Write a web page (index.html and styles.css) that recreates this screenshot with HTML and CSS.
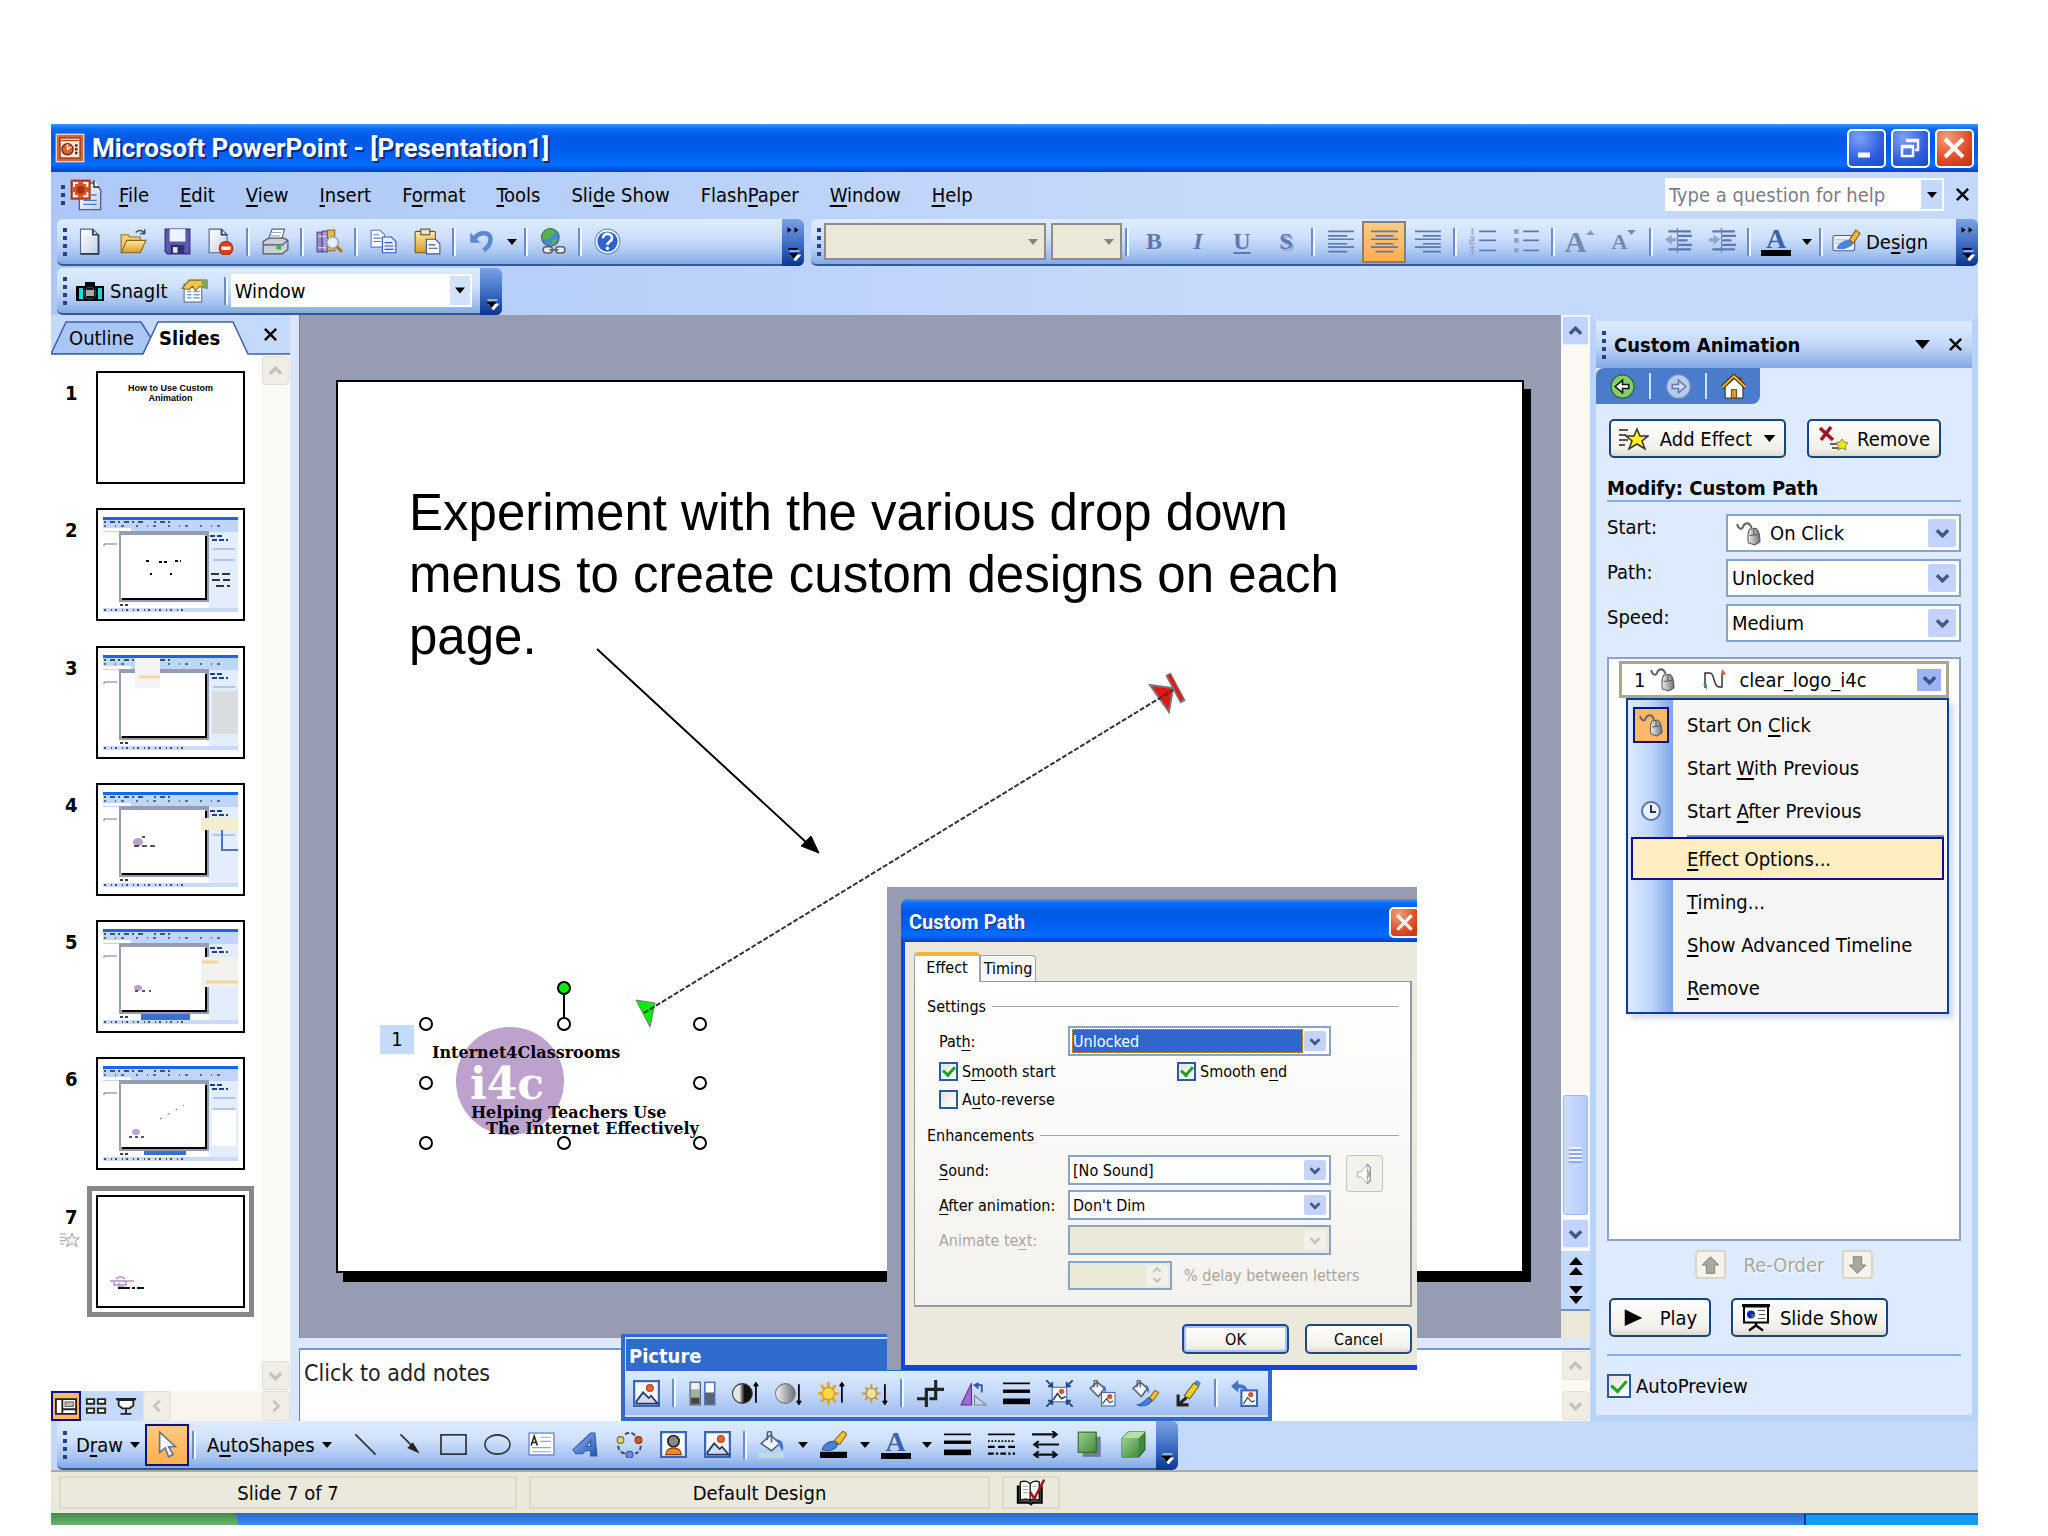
FILE: index.html
```
<!DOCTYPE html>
<html lang="en">
<head>
    <meta charset="UTF-8">
    <meta name="viewport" content="width=device-width, initial-scale=1.0">
    <title>Microsoft PowerPoint - [Presentation1]</title>
    <link rel="stylesheet" href="styles.css">
</head>
<body>
    <!-- Icon sprite, 24x24 grid -->
    <svg class="sprite" aria-hidden="true">
        <defs>
            <linearGradient id="g-page" x1="0" y1="0" x2="1" y2="1"><stop offset="0" stop-color="#fff"/><stop offset="1" stop-color="#c3d0e6"/></linearGradient>
            <linearGradient id="g-gold" x1="0" y1="0" x2="0" y2="1"><stop offset="0" stop-color="#ffe9a0"/><stop offset="1" stop-color="#d99a2b"/></linearGradient>
            <linearGradient id="g-blue" x1="0" y1="0" x2="1" y2="1"><stop offset="0" stop-color="#8fb8f4"/><stop offset="1" stop-color="#2456b0"/></linearGradient>
            <linearGradient id="g-green" x1="0" y1="0" x2="1" y2="1"><stop offset="0" stop-color="#9ad28e"/><stop offset="1" stop-color="#3f8a3c"/></linearGradient>
            <linearGradient id="g-gray" x1="0" y1="0" x2="1" y2="0"><stop offset="0" stop-color="#f2f2f2"/><stop offset="1" stop-color="#6c7078"/></linearGradient>
            <linearGradient id="g-half" x1="0" y1="0" x2="1" y2="0"><stop offset=".35" stop-color="#e6e6e6"/><stop offset=".6" stop-color="#111"/></linearGradient>
        </defs>
        <symbol id="i-app" viewBox="0 0 24 24"><rect x="1" y="1" width="22" height="22" fill="#d9643a" stroke="#ffd9c2"/><rect x="4" y="4" width="16" height="16" fill="#fbe6d8" stroke="#8d3213"/><path d="M5 6h14" stroke="#a84421"/><circle cx="10" cy="13" r="4.500" fill="#d9643a" stroke="#6d220a"/><path d="M10 9v4l3-2" fill="none" stroke="#fff"/><path d="M17 9v2M17 12v2M17 15v2" stroke="#6d220a" stroke-width="2"/></symbol>
        <symbol id="i-doc" viewBox="0 0 24 24"><path d="M7 3h11l5 5v15H7z" fill="url(#g-page)" stroke="#4d638f"/><path d="M18 1v5h4" fill="#fff" stroke="#222"/><path d="M10 16h10M10 19h10M16 12h4" stroke="#4b78c8"/><rect x="1" y="1" width="14" height="14" fill="#d9532b" stroke="#9d3412"/><path d="M3 6V3h3M10 3h3v3M13 10v3h-3M6 13H3v-3" fill="none" stroke="#fff" stroke-width="1.500"/><circle cx="8" cy="8" r="3" fill="#a5330c"/></symbol>
        <symbol id="i-new" viewBox="0 0 24 24"><path d="M4 1h11l5 5v17H4z" fill="url(#g-page)" stroke="#56688c"/><path d="M15 1v5h5M20 6v17H4" fill="none" stroke="#2c3a58" stroke-width="1.5"/></symbol>
        <symbol id="i-open" viewBox="0 0 24 24"><path d="M1 22V6h6l2 2h9v4" fill="#f4d074" stroke="#9a7420"/><path d="M1 22l5-11h17l-5 11z" fill="url(#g-gold)" stroke="#8a6415"/><path d="M14 4c3-3 6-2 8 1M22 1v4h-4" fill="none" stroke="#43556f" stroke-width="1.4"/></symbol>
        <symbol id="i-save" viewBox="0 0 24 24"><path d="M1 1h22v22H3l-2-2z" fill="#5d57b5" stroke="#2f2b78"/><rect x="5" y="1" width="14" height="11" fill="#eef3ff"/><rect x="6" y="15" width="12" height="8" fill="#30306a"/><rect x="8" y="17" width="4" height="5" fill="#dfe6f4"/></symbol>
        <symbol id="i-perm" viewBox="0 0 24 24"><path d="M1 1h11l5 5v16H1z" fill="url(#g-page)" stroke="#56688c"/><path d="M12 1v5h5" fill="none" stroke="#2c3a58" stroke-width="1.5"/><circle cx="16" cy="18" r="6" fill="#e2421b" stroke="#9d2a0b"/><rect x="12" y="16.500" width="8" height="3" fill="#fff"/></symbol>
        <symbol id="i-print" viewBox="0 0 24 24"><path d="M9 1h11l-3 11H5z" fill="#fff" stroke="#5a6478"/><path d="M9 4h8M8 7h8" stroke="#9aa6bd"/><path d="M1 12l5-3h13l4 2v8l-5 4H1z" fill="#c9ced8" stroke="#4a5263"/><path d="M1 15h17l5-4" fill="none" stroke="#4a5263"/><rect x="13" y="16" width="4" height="3" fill="#1fc21f"/></symbol>
        <symbol id="i-research" viewBox="0 0 26 24"><rect x="1" y="3" width="5" height="19" fill="#9b86cf" stroke="#55418d"/><rect x="6" y="2" width="5" height="20" fill="#a99bd8" stroke="#55418d"/><rect x="11" y="1" width="7" height="20" fill="#e6b74b" stroke="#8a6415"/><path d="M2 7h8M2 18h8" stroke="#e9e0ff"/><circle cx="16" cy="13" r="5.500" fill="#e4f0ff" stroke="#9aa3b2" stroke-width="1.500"/><path d="M20 17l5 5" stroke="#b3791b" stroke-width="3"/></symbol>
        <symbol id="i-copy" viewBox="0 0 24 24"><path d="M1 2h8l4 4v11H1z" fill="#fff" stroke="#5a7fc0"/><path d="M3 6h5M3 9h7M3 12h7" stroke="#5a7fc0"/><path d="M11 8h8l4 4v10H11z" fill="#e6efff" stroke="#2f5aac"/><path d="M13 13h7M13 16h8M13 19h8" stroke="#2f5aac"/></symbol>
        <symbol id="i-paste" viewBox="0 0 24 24"><rect x="1" y="3" width="18" height="19" rx="1" fill="url(#g-gold)" stroke="#7d5a14"/><rect x="6" y="1" width="8" height="5" fill="#e8e3d0" stroke="#5b563f"/><path d="M11 10h8l4 4v9H11z" fill="#fff" stroke="#3f5686"/><path d="M13 15h6M13 18h8" stroke="#3f5686"/></symbol>
        <symbol id="i-undo" viewBox="0 0 24 24"><path d="M2 4v9h9z" fill="#5b87d6"/><path d="M6 9c4-6 14-6 14 1 0 4-2 7-6 10" fill="none" stroke="#5b87d6" stroke-width="4"/></symbol>
        <symbol id="i-link" viewBox="0 0 26 26"><circle cx="10" cy="9" r="8.500" fill="#4c86d6" stroke="#3b6a5a"/><path d="M3 5c4-5 10-4 12-1-1 3-4 2-5 5s-4 1-8 2zM11 12l6-2-4 7z" fill="#57b548"/><rect x="3" y="18" width="9" height="6" rx="3" fill="#eee" stroke="#59606c" stroke-width="1.500"/><rect x="15" y="18" width="9" height="6" rx="3" fill="#eee" stroke="#59606c" stroke-width="1.500"/><path d="M9 21h9" stroke="#59606c" stroke-width="1.500"/></symbol>
        <symbol id="i-help" viewBox="0 0 24 24"><circle cx="12" cy="12" r="11" fill="#f4f8ff" stroke="#7390c4"/><circle cx="12" cy="12" r="9" fill="#2f62cf"/><path d="M8 9c0-5 8-5 8 0 0 3-4 3-4 6" fill="none" stroke="#fff" stroke-width="2.400"/><circle cx="12" cy="18" r="1.500" fill="#fff"/></symbol>
        <symbol id="i-left" viewBox="0 0 24 24"><path d="M1 3h23M1 7h17M1 10h23M1 14h17M1 17h23M1 21h17" stroke="currentColor" stroke-width="1.400"/></symbol>
        <symbol id="i-center" viewBox="0 0 24 24"><path d="M0 3h24M4 7h16M0 10h24M4 14h16M0 17h24M4 21h16" stroke="currentColor" stroke-width="1.400"/></symbol>
        <symbol id="i-right" viewBox="0 0 24 24"><path d="M0 3h23M7 7h16M0 10h23M7 14h16M0 17h23M7 21h16" stroke="currentColor" stroke-width="1.400"/></symbol>
        <symbol id="i-num" viewBox="0 0 24 24"><path d="M9 3h15M9 11h15M9 20h15" stroke="currentColor" stroke-width="1.400"/><path d="M3 0v6M1 8h3v3H1v3h4M1 17h3l-2 3 2 1-1 3H0" fill="none" stroke="#9aa9c8" stroke-width="1.500"/></symbol>
        <symbol id="i-bul" viewBox="0 0 24 24"><path d="M9 3h14M9 11h14M9 20h14" stroke="currentColor" stroke-width="1.400"/><path d="M1 3h4M1 11h4M1 20h4" stroke="#8fa0c4" stroke-width="4"/></symbol>
        <symbol id="i-outdent" viewBox="0 0 24 24"><path d="M3 3h20M11 7h13M11 11h9M11 15h13M3 19h20" stroke="currentColor" stroke-width="2"/><path d="M11 0v24" stroke="currentColor" stroke-dasharray="2 2"/><path d="M0 10l6-4v3h4v3H6v3z" fill="#94a3c4"/></symbol>
        <symbol id="i-indent" viewBox="0 0 24 24"><path d="M3 3h20M11 7h13M11 11h9M11 15h13M3 19h20" stroke="currentColor" stroke-width="2"/><path d="M11 0v24" stroke="currentColor" stroke-dasharray="2 2"/><path d="M10 10L4 6v3H0v3h4v3z" fill="#94a3c4"/></symbol>
        <symbol id="i-design" viewBox="0 0 26 24"><rect x="1" y="6" width="20" height="14" rx="2" fill="#f1f4fa" stroke="#4a5f8f"/><path d="M3 10h12M3 13h9" stroke="#b6bfd0"/><path d="M4 18c2-5 8-8 12-8l4 3c-2 4-9 7-16 5z" fill="#4c82da"/><path d="M16 10l6-9 4 3-6 9z" fill="#f0b53c" stroke="#8a6415"/></symbol>
        <symbol id="i-camera" viewBox="0 0 30 24"><path d="M10 3h10v4h9v15H1V7h9z" fill="#000"/><rect x="4" y="9" width="4" height="11" fill="#19d9d9"/><rect x="23" y="9" width="4" height="11" fill="#19d9d9"/><circle cx="15" cy="14" r="6" fill="#111" stroke="#555"/><rect x="11" y="11" width="8" height="6" fill="#aaa"/></symbol>
        <symbol id="i-props" viewBox="0 0 26 24"><path d="M3 6h17v17H3z" fill="#fff" stroke="#51658e"/><path d="M6 13h4M12 13h6M6 16h4M12 16h6M6 19h4M12 19h6" stroke="#7e9bcf" stroke-width="1.400"/><path d="M1 10l7-8h17v8l-7-2-4 4-3-4-3 3z" fill="#e9c84c" stroke="#7d6316"/><path d="M19 2h7v7h-5z" fill="#7aa85f"/></symbol>
        <symbol id="i-x" viewBox="0 0 16 16"><path d="M2 2l12 12M14 2L2 14" stroke="currentColor" stroke-width="2.600"/></symbol>
        <symbol id="i-tri" viewBox="0 0 10 6"><path d="M0 0h10L5 6z" fill="currentColor"/></symbol>
        <symbol id="i-chev" viewBox="0 0 16 10"><path d="M2 2l6 6 6-6" fill="none" stroke="currentColor" stroke-width="3.600"/></symbol>
        <symbol id="i-chev-up" viewBox="0 0 16 10"><path d="M2 8l6-6 6 6" fill="none" stroke="currentColor" stroke-width="3.600"/></symbol>
        <symbol id="i-chev-l" viewBox="0 0 10 16"><path d="M8 2L2 8l6 6" fill="none" stroke="currentColor" stroke-width="3"/></symbol>
        <symbol id="i-chev-r" viewBox="0 0 10 16"><path d="M2 2l6 6-6 6" fill="none" stroke="currentColor" stroke-width="3"/></symbol>
        <symbol id="i-more" viewBox="0 0 14 40"><path d="M1 4v6l4-3zM8 4v6l4-3z" fill="#000"/><path d="M3 28h10M4 32h10l-5 6z" stroke="#fff" fill="#fff"/><path d="M2 26h9" stroke="#000" stroke-width="2"/><path d="M2 30h10l-5 6z" fill="#000"/></symbol>
        <symbol id="i-more-one" viewBox="0 0 14 40"><path d="M3 28h10M4 32h10l-5 6z" stroke="#fff" fill="#fff"/><path d="M2 30h10l-5 6z" fill="#000"/></symbol>
        <symbol id="i-mouse" viewBox="0 0 24 24"><path d="M1 3c2 6 5 5 6 2s6-5 8 2" fill="none" stroke="#666" stroke-width="2"/><path d="M13 8l6-1c3 2 4 8 4 13l-5 3-6-2c-1-5-1-9 1-13z" fill="url(#g-gray)" stroke="#555"/><path d="M13 14l8-1M17 8v6" stroke="#555"/></symbol>
        <symbol id="i-clock" viewBox="0 0 24 24"><circle cx="12" cy="12" r="9" fill="#eaf2ff" stroke="#5a74a8" stroke-width="2"/><path d="M12 6v7h5" fill="none" stroke="#333" stroke-width="2"/></symbol>
        <symbol id="i-path" viewBox="0 0 26 24"><path d="M3 20V5h5c5 0 3 14 9 14h3V5" fill="none" stroke="#333" stroke-width="1.500"/><path d="M1 16h4v6z" fill="#3aa06a"/><path d="M20 1l4 5-5 2z" fill="#e05a3a"/></symbol>
        <symbol id="i-star" viewBox="0 0 30 24"><path d="M0 3h9M0 8h7M0 13h9M0 18h6" stroke="#222" stroke-width="1.500"/><path d="M18 2l3 7h8l-6 5 3 8-8-5-8 5 3-8-6-5h8z" fill="#ffee20" stroke="#333" stroke-width="1.500"/></symbol>
        <symbol id="i-remove" viewBox="0 0 32 26"><path d="M2 2l13 12M13 1L3 14" stroke="#a3141c" stroke-width="3.500"/><path d="M12 18h8M14 22h8" stroke="#333" stroke-width="1.500"/><path d="M24 13l2 3 4 1-3 3 1 4-4-2-4 2 1-4-3-3 4-1z" fill="#f0e61e" stroke="#8c8a30"/></symbol>
        <symbol id="i-home" viewBox="0 0 24 24"><path d="M17 3h3v6h-3z" fill="#a3381c"/><path d="M4 12v11h17V12l-8-8z" fill="#fff" stroke="#333"/><path d="M1 13L12.500 2 24 13" fill="none" stroke="#3b2c05" stroke-width="4"/><path d="M1 13L12.500 2 24 13" fill="none" stroke="#e9b63a" stroke-width="2"/><rect x="10" y="15" width="5" height="8" fill="#d99a2b" stroke="#6b4a0c"/></symbol>
        <symbol id="i-back" viewBox="0 0 24 24"><circle cx="12" cy="12" r="11" fill="#84cf6a" stroke="#235c1c"/><path d="M5 12l7-6v4h6v4h-6v4z" fill="#fff" stroke="#111" stroke-width="1.500"/></symbol>
        <symbol id="i-fwd" viewBox="0 0 24 24"><circle cx="12" cy="12" r="11" fill="#b9cbea" stroke="#8fa6d2"/><path d="M19 12l-7-6v4H6v4h6v4z" fill="#d5e0f4" stroke="#5e79b4" stroke-width="1.500"/></symbol>
        <symbol id="i-up" viewBox="0 0 24 24"><path d="M12 2l10 10h-5v10H7V12H2z" fill="#aaa99c" stroke="#77766c"/></symbol>
        <symbol id="i-down" viewBox="0 0 24 24"><path d="M12 22L2 12h5V2h10v10h5z" fill="#aaa99c" stroke="#77766c"/></symbol>
        <symbol id="i-play" viewBox="0 0 24 24"><path d="M2 2l20 10L2 21z" fill="#000"/></symbol>
        <symbol id="i-show" viewBox="0 0 30 28"><path d="M1 2h28" stroke="#000" stroke-width="3"/><rect x="3" y="3" width="24" height="16" fill="#fff" stroke="#000" stroke-width="2"/><circle cx="10" cy="11" r="4" fill="#1722b8"/><path d="M10 11h5l-4 4z" fill="#2a9a3a"/><path d="M17 7h7M18 11h6M17 15h7" stroke="#555"/><path d="M15 19v3M15 22l-7 5M15 22l7 5" stroke="#000" stroke-width="2.400"/></symbol>
        <symbol id="i-view-n" viewBox="0 0 24 18"><path d="M1 1h22v16H1zM8 1v16M8 12h15" fill="#fff" stroke="#222" stroke-width="2"/><rect x="11" y="4" width="9" height="5" fill="#bbb" stroke="#555"/></symbol>
        <symbol id="i-view-s" viewBox="0 0 24 18"><path d="M2 1h8v5H2zM14 1h8v5h-8zM2 11h8v5H2zM14 11h8v5h-8z" fill="#fff" stroke="#222" stroke-width="2"/></symbol>
        <symbol id="i-view-p" viewBox="0 0 24 18"><path d="M1 1h22" stroke="#222" stroke-width="2.500"/><path d="M4 2h16v6l-4 3H8L4 8zM12 11v5M6 17h12" fill="#fff" stroke="#222" stroke-width="2"/></symbol>
        <symbol id="i-cursor" viewBox="0 0 24 24"><path d="M5 1v18l5-4 3 8 4-2-4-7h6z" fill="#fff" stroke="#6b7690" stroke-width="1.500"/></symbol>
        <symbol id="i-line" viewBox="0 0 24 24"><path d="M3 3l18 18" stroke="#333" stroke-width="1.600"/></symbol>
        <symbol id="i-arrow" viewBox="0 0 24 24"><path d="M4 3l12 12" stroke="#333" stroke-width="1.600"/><path d="M21 20l-11-5 5-5z" fill="#222"/></symbol>
        <symbol id="i-rect" viewBox="0 0 28 24"><rect x="1" y="2" width="26" height="20" fill="none" stroke="#222" stroke-width="1.600"/></symbol>
        <symbol id="i-oval" viewBox="0 0 28 24"><ellipse cx="14" cy="12" rx="13" ry="10" fill="none" stroke="#333" stroke-width="1.600"/></symbol>
        <symbol id="i-text" viewBox="0 0 26 24"><rect x="1" y="1" width="24" height="21" fill="#fff" stroke="#4a6db0"/><path d="M3 13l3-9 3 9M4 10h4" fill="none" stroke="#222" stroke-width="1.500"/><path d="M12 5h10M12 9h10M4 15h18M4 19h18" stroke="#8fa6d2"/></symbol>
        <symbol id="i-wordart" viewBox="0 0 26 24"><path d="M1 17L18 1h4l2 22h-6v-5h-5l-3 3H4zM14 14h4V8z" fill="url(#g-blue)" stroke="#2c56a8"/></symbol>
        <symbol id="i-diagram" viewBox="0 0 24 24"><path d="M8 3c3-2 6-2 9 1M22 13c0 4-2 6-5 7M2 13c0 4 2 6 6 7" fill="none" stroke="#444c60" stroke-width="1.800" stroke-dasharray="4 2"/><circle cx="4" cy="8" r="3" fill="#e5d94a" stroke="#666"/><circle cx="20" cy="8" r="3" fill="#e2512b" stroke="#8c2f14"/><circle cx="12" cy="21" r="3" fill="#6e8bea" stroke="#2f4a9d"/></symbol>
        <symbol id="i-clip" viewBox="0 0 24 24"><rect x="1" y="1" width="22" height="22" fill="#fff" stroke="#3c66b4" stroke-width="2"/><circle cx="12" cy="9" r="5" fill="#888" stroke="#222" stroke-width="1.500"/><path d="M5 21c0-8 14-8 14 0z" fill="#f08a24" stroke="#8a3f0c"/></symbol>
        <symbol id="i-pic" viewBox="0 0 24 24"><rect x="1" y="1" width="22" height="22" fill="#f4f9ff" stroke="#3c66b4" stroke-width="2"/><circle cx="15" cy="7" r="3" fill="#f0642c" stroke="#b23d12"/><path d="M3 19l6-8 5 5 2-2 6 7H3z" fill="#cfdcf2" stroke="#24365e" stroke-width="1.500"/></symbol>
        <symbol id="i-fill" viewBox="0 0 26 26"><rect x="0" y="21" width="25" height="5" fill="#b8dfe0"/><path d="M3 12L12 4l9 8-8 7z" fill="#f1f5fb" stroke="#555f73" stroke-width="1.500"/><path d="M9 9V2c0-2 4-2 4 0v9" fill="none" stroke="#555f73" stroke-width="1.500"/><path d="M17 8c6 0 8 4 7 11-3-2-3-5-4-8z" fill="#3f73cf"/></symbol>
        <symbol id="i-brush" viewBox="0 0 26 26"><rect x="0" y="20" width="26" height="6" fill="#000"/><path d="M2 18c1-5 6-8 11-8l4 3c-2 5-8 7-15 5z" fill="#4c82da" stroke="#2c56a8"/><path d="M14 9l8-9 4 3-7 10z" fill="#f0c23c" stroke="#8a6415"/></symbol>
        <symbol id="i-weight" viewBox="0 0 24 24"><path d="M0 3h24" stroke="#000" stroke-width="1.500"/><path d="M0 10h24" stroke="#000" stroke-width="3"/><path d="M0 19h24" stroke="#000" stroke-width="5"/></symbol>
        <symbol id="i-dash" viewBox="0 0 24 24"><path d="M0 3h24" stroke="#000" stroke-width="1.500"/><path d="M0 9h24" stroke="#000" stroke-width="1.500" stroke-dasharray="1.500 1.500"/><path d="M0 14h24" stroke="#000" stroke-width="2" stroke-dasharray="6 3"/><path d="M0 20h24" stroke="#000" stroke-width="2" stroke-dasharray="5 2 2 2"/></symbol>
        <symbol id="i-arrows" viewBox="0 0 24 24"><path d="M0 3h22M2 12h22M3 21h18M18 0l4 3-4 3M6 9l-4 3 4 3M6 18l-4 3 4 3M18 18l4 3-4 3" fill="none" stroke="#111" stroke-width="1.800"/></symbol>
        <symbol id="i-shadow" viewBox="0 0 24 24"><rect x="6" y="5" width="16" height="18" fill="#6d7f9c"/><rect x="2" y="1" width="16" height="18" fill="url(#g-green)" stroke="#2e6b2c"/></symbol>
        <symbol id="i-cube" viewBox="0 0 24 26"><path d="M1 7l6-6h16v17l-6 7H1z" fill="#3f8a3c" stroke="#235c1c"/><path d="M1 7h16v18H1z" fill="url(#g-green)"/><path d="M1 7l6-6h16l-6 6z" fill="#b6e2aa"/></symbol>
        <symbol id="i-color" viewBox="0 0 26 24"><rect x="1" y="1" width="10" height="22" fill="#9db59a" stroke="#4a5a78"/><path d="M2 2h8v6H2z" fill="#eef"/><path d="M2 16h8v6H2z" fill="#444"/><rect x="15" y="1" width="10" height="22" fill="#5b6270" stroke="#4a7ad0"/><path d="M16 2h8v9h-8z" fill="#fff"/></symbol>
        <symbol id="i-con-up" viewBox="0 0 26 24"><circle cx="10" cy="12" r="9.500" fill="url(#g-half)" stroke="#333"/><path d="M23 3v18M21 5l2-3 2 3" fill="none" stroke="#000" stroke-width="1.700"/></symbol>
        <symbol id="i-con-dn" viewBox="0 0 26 24"><circle cx="10" cy="12" r="9.500" fill="url(#g-gray)" stroke="#777"/><path d="M23 3v18M21 19l2 3 2-3" fill="none" stroke="#000" stroke-width="1.700"/></symbol>
        <symbol id="i-sun-up" viewBox="0 0 26 24"><path d="M10 1v22M0 12h20M3 4l14 16M17 4L3 20" stroke="#eda215" stroke-width="2.500"/><circle cx="10" cy="12" r="6" fill="#ffd83a" stroke="#d98c10"/><path d="M23 3v18M21 5l2-3 2 3" fill="none" stroke="#000" stroke-width="1.700"/></symbol>
        <symbol id="i-sun-dn" viewBox="0 0 26 24"><path d="M10 3v18M1 12h18M4 6l12 12M16 6L4 18" stroke="#c79a4a" stroke-width="2"/><circle cx="10" cy="12" r="5" fill="#f3e39a" stroke="#a8853c"/><path d="M23 3v18M21 19l2 3 2-3" fill="none" stroke="#000" stroke-width="1.700"/></symbol>
        <symbol id="i-crop" viewBox="0 0 26 26"><path d="M18 0v18h-6M26 9H9v17M0 18h8" fill="none" stroke="#222" stroke-width="3"/></symbol>
        <symbol id="i-rotate" viewBox="0 0 26 24"><path d="M11 2v21H1z" fill="#a06ad0" stroke="#5a2f8c"/><path d="M14 23V14l11 9z" fill="#ccd3e0" stroke="#7a8496"/><path d="M15 4h6v7M18 2l-4 2 4 3" fill="none" stroke="#2c56a8" stroke-width="1.700"/></symbol>
        <symbol id="i-compress" viewBox="0 0 26 26"><rect x="6" y="7" width="14" height="14" fill="#fff" stroke="#3c66b4"/><circle cx="15" cy="11" r="2.500" fill="#e2512b"/><path d="M7 19l4-6 4 5 4-2" fill="none" stroke="#24365e" stroke-width="1.500"/><path d="M0 0l6 6M26 0l-6 6M0 26l6-6M26 26l-6-6M6 2v4H2M20 2v4h4M6 24v-4H2M20 24v-4h4" fill="none" stroke="#24488e" stroke-width="1.800"/></symbol>
        <symbol id="i-recolor" viewBox="0 0 26 26"><path d="M1 8l7-6 7 6-6 8z" fill="#f1f5fb" stroke="#555f73" stroke-width="1.500"/><path d="M5 7V1c0-1 3-1 3 0v6" fill="none" stroke="#555f73" stroke-width="1.300"/><path d="M12 5c4 0 5 3 4 8z" fill="#3f73cf"/><rect x="12" y="12" width="13" height="13" fill="#fff" stroke="#3c66b4"/><circle cx="20" cy="16" r="2.500" fill="#e2512b"/><path d="M13 23l4-5 3 4 3-2" fill="none" stroke="#24365e"/></symbol>
        <symbol id="i-format" viewBox="0 0 26 26"><path d="M1 8l7-6 7 6-6 8z" fill="#f1f5fb" stroke="#555f73" stroke-width="1.500"/><path d="M5 7V1c0-1 3-1 3 0v6" fill="none" stroke="#555f73" stroke-width="1.300"/><path d="M12 5c4 0 5 3 4 8z" fill="#3f73cf"/><path d="M5 24c3 2 11 1 14-4l-3-3c-3 1-4 6-11 7z" fill="#4c82da" stroke="#2c56a8"/><path d="M17 17l5-7 4 2-6 8z" fill="#f0c23c" stroke="#8a6415"/></symbol>
        <symbol id="i-trans" viewBox="0 0 24 26"><path d="M8 15l9-12 5 3-9 12z" fill="#f4cf2c" stroke="#6b5a10"/><path d="M17 3l3-3 4 3-2 3z" fill="#4c82da"/><path d="M2 14v10h10M2 24l8-7" fill="none" stroke="#222" stroke-width="3"/></symbol>
        <symbol id="i-reset" viewBox="0 0 26 26"><path d="M0 6l7-6v4c7 0 9 3 9 8-2-3-4-4-9-4v4z" fill="#3f73cf"/><rect x="10" y="10" width="15" height="15" fill="#fff" stroke="#3c66b4" stroke-width="2"/><circle cx="19" cy="14" r="2.500" fill="#e2512b"/><path d="M12 23l4-6 4 4 3-1" fill="none" stroke="#24365e"/></symbol>
        <symbol id="i-book" viewBox="0 0 36 34"><path d="M2 9v21h14l2 2 2-2h11V9" fill="#555" stroke="#000" stroke-width="2.500"/><path d="M5 5c5-2 9-1 12 2v20c-3-2-7-2-12 0zM17 7c3-3 7-4 11-2v22c-5-2-8-2-11 0z" fill="#fff" stroke="#000" stroke-width="1.500"/><path d="M8 10h6M8 14h6M8 18h6M20 10h5" stroke="#888"/><path d="M17 17l5 8L34 2" fill="none" stroke="#a3141c" stroke-width="3"/></symbol>
        <symbol id="i-sound" viewBox="0 0 24 30"><path d="M2 12h5l8-10v26l-8-9H2z" fill="#fff" stroke="#999"/><path d="M15 2l4 4v18l-4 4M15 10l3 5-3 5" fill="none" stroke="#888" stroke-width="1.500"/></symbol>
        <symbol id="i-prev" viewBox="0 0 14 18"><path d="M7 0l7 8H0zM7 10l7 8H0z" fill="#000"/></symbol>
        <symbol id="i-next" viewBox="0 0 14 18"><path d="M0 0h14L7 8zM0 10h14l-7 8z" fill="#000"/></symbol>
        <!-- Shared chrome of the slide thumbnails -->
        <symbol id="mini" viewBox="0 0 145 109">
            <rect x="5" y="7" width="135" height="96" fill="#fff"/>
            <rect x="5" y="7" width="135" height="3" fill="#1766e8"/>
            <rect x="5" y="10" width="135" height="12" fill="#c0d6f8"/>
            <path d="M6 12h40M56 12h16" stroke="#223" stroke-width="1.500" stroke-dasharray="2 4 5 3"/>
            <path d="M6 16h128" stroke="#446" stroke-width="1.500" stroke-dasharray="2 9 1 5 3 12"/>
            <rect x="5" y="18" width="28" height="3" fill="#fff"/>
            <rect x="21" y="21" width="90" height="71" fill="#969cb2"/>
            <rect x="24" y="26" width="85" height="64" fill="#000"/>
            <rect x="23" y="25" width="84" height="63" fill="#fff"/>
            <rect x="111" y="22" width="29" height="76" fill="#e4edfc"/>
            <path d="M112 26h14M114 30h16" stroke="#1d3f8c" stroke-width="2" stroke-dasharray="5 2"/>
            <path d="M115 39h22M115 50h22" stroke="#7e9bd8" stroke-width="1"/>
            <path d="M22 95h8" stroke="#000" stroke-width="1.500" stroke-dasharray="3 2"/>
            <rect x="5" y="98" width="135" height="4" fill="#c9dbf9"/>
            <path d="M6 100h80" stroke="#223" stroke-width="1.500" stroke-dasharray="2 5 1 3"/>
            <path d="M6 36v-2h13" fill="none" stroke="#777"/>
        </symbol>
    </svg>

    <div class="window">
        <header class="titlebar">
            <svg class="app-icon"><use href="#i-app"/></svg>
            <h1>Microsoft PowerPoint - [Presentation1]</h1>
            <div class="caption-buttons">
                <button class="caption" aria-label="Minimize"><svg viewBox="0 0 24 24"><path d="M4 19h12" stroke="#fff" stroke-width="5"/></svg></button>
                <button class="caption" aria-label="Restore"><svg viewBox="0 0 24 24"><path d="M4 10h11v10H4zM4 11h11M9 6V4h11v10h-3M9 5h11" fill="none" stroke="#fff" stroke-width="2.500"/></svg></button>
                <button class="caption close" aria-label="Close"><svg viewBox="0 0 24 24"><path d="M3 3l18 18M21 3L3 21" stroke="#fff" stroke-width="4"/></svg></button>
            </div>
        </header>

        <nav class="menubar">
            <i class="grip"></i>
            <svg class="doc-icon"><use href="#i-doc"/></svg>
            <button><u>F</u>ile</button>
            <button><u>E</u>dit</button>
            <button><u>V</u>iew</button>
            <button><u>I</u>nsert</button>
            <button>F<u>o</u>rmat</button>
            <button><u>T</u>ools</button>
            <button>Sli<u>d</u>e Show</button>
            <button>Flash<u>P</u>aper</button>
            <button><u>W</u>indow</button>
            <button><u>H</u>elp</button>
            <div class="ask">
                <input type="text" placeholder="Type a question for help" aria-label="Type a question for help">
                <button class="ask-drop" aria-label="Recent questions"><svg class="tri"><use href="#i-tri"/></svg></button>
            </div>
            <button class="plain-x" aria-label="Close document"><svg><use href="#i-x"/></svg></button>
        </nav>

        <div class="toolbars">
            <div class="toolbar standard">
                <i class="grip"></i>
                <button class="tool" aria-label="New"><svg><use href="#i-new"/></svg></button>
                <button class="tool" aria-label="Open"><svg><use href="#i-open"/></svg></button>
                <button class="tool" aria-label="Save"><svg><use href="#i-save"/></svg></button>
                <button class="tool" aria-label="Permission"><svg><use href="#i-perm"/></svg></button>
                <i class="sep"></i>
                <button class="tool" aria-label="Print"><svg><use href="#i-print"/></svg></button>
                <i class="sep"></i>
                <button class="tool" aria-label="Research"><svg><use href="#i-research"/></svg></button>
                <i class="sep"></i>
                <button class="tool" aria-label="Copy"><svg><use href="#i-copy"/></svg></button>
                <button class="tool" aria-label="Paste"><svg><use href="#i-paste"/></svg></button>
                <i class="sep"></i>
                <button class="tool" aria-label="Undo"><svg><use href="#i-undo"/></svg></button>
                <button class="drop" aria-label="Undo list"><svg class="tri"><use href="#i-tri"/></svg></button>
                <i class="sep"></i>
                <button class="tool" aria-label="Hyperlink"><svg><use href="#i-link"/></svg></button>
                <i class="sep"></i>
                <button class="tool" aria-label="Help"><svg><use href="#i-help"/></svg></button>
                <button class="more" aria-label="Toolbar options"><svg><use href="#i-more"/></svg></button>
            </div>
            <div class="toolbar formatting">
                <i class="grip"></i>
                <div class="off-combo font-name"><select disabled aria-label="Font"></select><svg class="tri"><use href="#i-tri"/></svg></div>
                <div class="off-combo font-size"><select disabled aria-label="Font size"></select><svg class="tri"><use href="#i-tri"/></svg></div>
                <i class="sep"></i>
                <button class="tool letter"><b>B</b></button>
                <button class="tool letter"><em>I</em></button>
                <button class="tool letter"><u>U</u></button>
                <button class="tool letter shadowed">S</button>
                <i class="sep"></i>
                <button class="tool dim" aria-label="Align left"><svg><use href="#i-left"/></svg></button>
                <button class="tool dim pressed" aria-label="Center"><svg><use href="#i-center"/></svg></button>
                <button class="tool dim" aria-label="Align right"><svg><use href="#i-right"/></svg></button>
                <i class="sep"></i>
                <button class="tool dim" aria-label="Numbering"><svg><use href="#i-num"/></svg></button>
                <button class="tool dim" aria-label="Bullets"><svg><use href="#i-bul"/></svg></button>
                <i class="sep"></i>
                <button class="tool grow" aria-label="Increase font size">A<svg viewBox="0 0 10 6"><path d="M0 6h10L5 0z" fill="#8898b8"/></svg></button>
                <button class="tool grow less" aria-label="Decrease font size">A<svg><use href="#i-tri"/></svg></button>
                <i class="sep"></i>
                <button class="tool dim" aria-label="Decrease indent"><svg><use href="#i-outdent"/></svg></button>
                <button class="tool dim" aria-label="Increase indent"><svg><use href="#i-indent"/></svg></button>
                <i class="sep"></i>
                <button class="tool font-color">A</button>
                <button class="drop" aria-label="Font color list"><svg class="tri"><use href="#i-tri"/></svg></button>
                <i class="sep"></i>
                <button class="text-tool"><svg><use href="#i-design"/></svg><span>De<u>s</u>ign</span></button>
                <button class="more" aria-label="Toolbar options"><svg><use href="#i-more"/></svg></button>
            </div>
            <div class="toolbar snagit">
                <i class="grip"></i>
                <button class="text-tool"><svg><use href="#i-camera"/></svg><span>SnagIt</span></button>
                <button class="tool" aria-label="Profile"><svg><use href="#i-props"/></svg></button>
                <i class="sep"></i>
                <div class="snag-combo"><select aria-label="Capture input"><option>Window</option></select><svg class="tri"><use href="#i-tri"/></svg></div>
                <button class="more" aria-label="Toolbar options"><svg><use href="#i-more-one"/></svg></button>
            </div>
        </div>

        <main class="workspace">
            <aside class="outline-pane">
                <div class="pane-tabs">
                    <svg class="tab-shape" viewBox="0 0 239 40" preserveAspectRatio="none" aria-hidden="true">
                        <path d="M0 39L15 7h75l10 16-8 16z" fill="#a9c6f5" stroke="#3b62a8" stroke-width="1.500"/>
                        <path d="M0 40v-1h92L107 7h75l15 32h42v1z" fill="#fff"/>
                        <path d="M0 39h92L107 7h75l15 32h42" fill="none" stroke="#3b62a8" stroke-width="1.500"/>
                    </svg>
                    <button>Outline</button>
                    <button class="active">Slides</button>
                    <button class="plain-x" aria-label="Close pane"><svg><use href="#i-x"/></svg></button>
                </div>
                <div class="thumbs">
                    <ol>
                        <li><span>1</span>
                            <div class="thumb tiny-title">How to Use Custom<br>Animation</div></li>
                        <li><span>2</span>
                            <svg class="thumb" viewBox="0 0 145 109"><use href="#mini"/><path d="M48 51h4M61 52h8M77 51h6M52 64h2M72 64h2" stroke="#000" stroke-width="2" stroke-dasharray="3 2"/><path d="M113 64h22M114 70h18M118 76h14" stroke="#333" stroke-width="2" stroke-dasharray="8 3"/></svg></li>
                        <li><span>3</span>
                            <svg class="thumb" viewBox="0 0 145 109"><use href="#mini"/><rect x="37" y="10" width="25" height="30" fill="#f4f4f8"/><path d="M41 29h21" stroke="#f7d9a0" stroke-width="3"/><rect x="114" y="43" width="26" height="43" fill="#dadde0"/></svg></li>
                        <li><span>4</span>
                            <svg class="thumb" viewBox="0 0 145 109"><use href="#mini"/><ellipse cx="40" cy="57" rx="5" ry="4" fill="#b9a3cc"/><path d="M36 61h24M44 52h3" stroke="#222" stroke-width="1.500" stroke-dasharray="5 3"/><rect x="103" y="33" width="37" height="12" fill="#f6ecd0"/><path d="M124 45v20h16" fill="none" stroke="#4a74c8" stroke-width="2"/></svg></li>
                        <li><span>5</span>
                            <svg class="thumb" viewBox="0 0 145 109"><use href="#mini"/><ellipse cx="40" cy="66" rx="4" ry="3" fill="#b9a3cc"/><path d="M37 69h16" stroke="#222" stroke-width="1.500" stroke-dasharray="3 4"/><rect x="103" y="35" width="37" height="30" fill="#f1f1ee"/><path d="M104 40h16M108 60h32" stroke="#f3d795" stroke-width="3"/><rect x="43" y="92" width="49" height="6" fill="#3a6fca"/></svg></li>
                        <li><span>6</span>
                            <svg class="thumb" viewBox="0 0 145 109"><use href="#mini"/><ellipse cx="38" cy="73" rx="4" ry="3" fill="#b9a3cc"/><path d="M31 78h16" stroke="#222" stroke-width="1.500" stroke-dasharray="3 3"/><path d="M62 60l24-14" stroke="#555" stroke-dasharray="2 7"/><rect x="46" y="92" width="42" height="4" fill="#3a6fca"/><rect x="114" y="51" width="24" height="36" fill="#fff"/></svg></li>
                        <li><span>7<svg class="anim-mark"><use href="#i-star"/></svg></span>
                            <svg class="thumb selected" viewBox="0 0 145 109"><path d="M12 84h24M16 84v4h12v-4M18 82c2-3 7-3 9 0M21 86v4h5" fill="none" stroke="#b592c4" stroke-width="1.500"/><path d="M20 91h26" stroke="#111" stroke-width="2" stroke-dasharray="12 2 3 2"/></svg></li>
                    </ol>
                    <div class="scroll off">
                        <button aria-label="Scroll up"><svg><use href="#i-chev-up"/></svg></button>
                        <button aria-label="Scroll down"><svg><use href="#i-chev"/></svg></button>
                    </div>
                </div>
                <div class="views">
                    <button class="on" aria-label="Normal view"><svg><use href="#i-view-n"/></svg></button>
                    <button aria-label="Slide sorter view"><svg><use href="#i-view-s"/></svg></button>
                    <button aria-label="Slide show"><svg><use href="#i-view-p"/></svg></button>
                    <div class="hscroll">
                        <button aria-label="Scroll left"><svg><use href="#i-chev-l"/></svg></button>
                        <button aria-label="Scroll right"><svg><use href="#i-chev-r"/></svg></button>
                    </div>
                </div>
            </aside>

            <section class="editor">
                <div class="stage">
                    <div class="slide">
                        <p class="slide-text">Experiment with the various drop down<br>menus to create custom designs on each<br>page.</p>
                        <div class="logo">
                            <span class="logo-top">Internet4Classrooms</span>
                            <span class="logo-mid">i4c</span>
                            <span class="logo-help">Helping Teachers Use</span>
                            <span class="logo-net">The Internet Effectively</span>
                        </div>
                        <span class="order-tag">1</span>
                        <!-- callout arrow, selection handles and motion path -->
                        <svg class="drawing" viewBox="0 0 1183 888">
                            <path d="M259 267l211 195" stroke="#000" stroke-width="2"/>
                            <path d="M481 471l-18-7 10-10z" fill="#000" stroke="#000"/>
                            <path d="M226 610v28" stroke="#000" stroke-width="2"/>
                            <g fill="#fff" stroke="#000" stroke-width="2">
                                <circle cx="226" cy="606" r="6" fill="#0e0"/>
                                <circle cx="88" cy="642" r="6"/><circle cx="226" cy="642" r="6"/><circle cx="362" cy="642" r="6"/>
                                <circle cx="88" cy="701" r="6"/><circle cx="362" cy="701" r="6"/>
                                <circle cx="88" cy="761" r="6"/><circle cx="226" cy="761" r="6"/><circle cx="362" cy="761" r="6"/>
                            </g>
                            <path d="M298 618l19 3-5 24z" fill="#0e0" stroke="#777"/>
                            <path d="M812 303l23 3-4 24z" fill="#e11" stroke="#777" stroke-width="2"/>
                            <path d="M830 292l15 28" stroke="#777" stroke-width="6"/>
                            <path d="M831 293l13 25" stroke="#e11" stroke-width="3"/>
                            <path d="M306 631L835 308" stroke="#333" stroke-width="2" stroke-dasharray="5 2"/>
                        </svg>
                    </div>
                </div>
                <div class="scroll main-scroll">
                    <button aria-label="Scroll up"><svg><use href="#i-chev-up"/></svg></button>
                    <div class="thumb-bar"></div>
                    <button aria-label="Scroll down"><svg><use href="#i-chev"/></svg></button>
                    <div class="jump">
                        <button aria-label="Previous slide"><svg><use href="#i-prev"/></svg></button>
                        <button aria-label="Next slide"><svg><use href="#i-next"/></svg></button>
                    </div>
                </div>
                <div class="splitter"></div>
                <textarea class="notes" aria-label="Notes" placeholder="Click to add notes"></textarea>
                <div class="scroll off notes-scroll">
                    <button aria-label="Scroll up"><svg><use href="#i-chev-up"/></svg></button>
                    <button aria-label="Scroll down"><svg><use href="#i-chev"/></svg></button>
                </div>

                <div class="picture-bar">
                    <h2>Picture</h2>
                    <div class="picture-tools">
                        <button class="tool" aria-label="Insert picture"><svg><use href="#i-pic"/></svg></button>
                        <i class="sep"></i>
                        <button class="tool" aria-label="Color"><svg><use href="#i-color"/></svg></button>
                        <button class="tool" aria-label="More contrast"><svg><use href="#i-con-up"/></svg></button>
                        <button class="tool" aria-label="Less contrast"><svg><use href="#i-con-dn"/></svg></button>
                        <button class="tool" aria-label="More brightness"><svg><use href="#i-sun-up"/></svg></button>
                        <button class="tool" aria-label="Less brightness"><svg><use href="#i-sun-dn"/></svg></button>
                        <i class="sep"></i>
                        <button class="tool" aria-label="Crop"><svg><use href="#i-crop"/></svg></button>
                        <button class="tool" aria-label="Rotate left"><svg><use href="#i-rotate"/></svg></button>
                        <button class="tool" aria-label="Line style"><svg><use href="#i-weight"/></svg></button>
                        <button class="tool" aria-label="Compress pictures"><svg><use href="#i-compress"/></svg></button>
                        <button class="tool" aria-label="Recolor picture"><svg><use href="#i-recolor"/></svg></button>
                        <button class="tool" aria-label="Format picture"><svg><use href="#i-format"/></svg></button>
                        <button class="tool" aria-label="Set transparent color"><svg><use href="#i-trans"/></svg></button>
                        <i class="sep"></i>
                        <button class="tool" aria-label="Reset picture"><svg><use href="#i-reset"/></svg></button>
                    </div>
                </div>

                <div class="dialog-shot">
                    <form class="dialog">
                        <header>
                            <h2>Custom Path</h2>
                            <button type="button" class="caption close" aria-label="Close"><svg viewBox="0 0 24 24"><path d="M3 3l18 18M21 3L3 21" stroke="#fff" stroke-width="4"/></svg></button>
                        </header>
                        <div class="dialog-tabs">
                            <button type="button" class="active">Effect</button>
                            <button type="button">Timing</button>
                        </div>
                        <div class="dialog-page">
                            <h3>Settings</h3>
                            <div class="row">
                                <label for="dlg-path">Pat<u>h</u>:</label>
                                <div class="combo focus"><select id="dlg-path"><option>Unlocked</option></select><span><svg><use href="#i-chev"/></svg></span></div>
                            </div>
                            <div class="checks">
                                <label><input type="checkbox" checked><span>S<u>m</u>ooth start</span></label>
                                <label><input type="checkbox" checked><span>Smooth e<u>n</u>d</span></label>
                                <label><input type="checkbox"><span>A<u>u</u>to-reverse</span></label>
                            </div>
                            <h3>Enhancements</h3>
                            <div class="row">
                                <label for="dlg-sound"><u>S</u>ound:</label>
                                <div class="combo"><select id="dlg-sound"><option>[No Sound]</option></select><span><svg><use href="#i-chev"/></svg></span></div>
                                <button type="button" class="sound" disabled aria-label="Volume"><svg><use href="#i-sound"/></svg></button>
                            </div>
                            <div class="row">
                                <label for="dlg-after"><u>A</u>fter animation:</label>
                                <div class="combo"><select id="dlg-after"><option>Don't Dim</option></select><span><svg><use href="#i-chev"/></svg></span></div>
                            </div>
                            <div class="row disabled">
                                <label for="dlg-text">Animate te<u>x</u>t:</label>
                                <div class="combo"><select id="dlg-text" disabled></select><span><svg><use href="#i-chev"/></svg></span></div>
                            </div>
                            <div class="row disabled delay">
                                <div class="spinner"><input id="dlg-delay" type="text" disabled><span><svg><use href="#i-chev-up"/></svg><svg><use href="#i-chev"/></svg></span></div>
                                <label for="dlg-delay">% <u>d</u>elay between letters</label>
                            </div>
                        </div>
                        <footer>
                            <button type="button" class="xp default">OK</button>
                            <button type="button" class="xp">Cancel</button>
                        </footer>
                    </form>
                </div>
            </section>

            <aside class="task-pane">
                <header>
                    <i class="grip"></i>
                    <h2>Custom Animation</h2>
                    <button aria-label="Other task panes"><svg class="big-tri"><use href="#i-tri"/></svg></button>
                    <button class="plain-x" aria-label="Close task pane"><svg><use href="#i-x"/></svg></button>
                </header>
                <div class="pane-nav">
                    <button aria-label="Back"><svg><use href="#i-back"/></svg></button>
                    <i></i>
                    <button aria-label="Forward"><svg><use href="#i-fwd"/></svg></button>
                    <i></i>
                    <button aria-label="Home"><svg><use href="#i-home"/></svg></button>
                </div>
                <div class="pane-body">
                    <div class="effect-buttons">
                        <button class="xp add"><svg><use href="#i-star"/></svg>Add Effect<svg class="big-tri"><use href="#i-tri"/></svg></button>
                        <button class="xp remove"><svg><use href="#i-remove"/></svg>Remove</button>
                    </div>
                    <h3>Modify: Custom Path</h3>
                    <div class="fields">
                        <label for="start">Start:</label>
                        <div class="combo with-icon"><svg class="mouse"><use href="#i-mouse"/></svg><select id="start"><option>On Click</option></select><span><svg><use href="#i-chev"/></svg></span></div>
                        <label for="path">Path:</label>
                        <div class="combo"><select id="path"><option>Unlocked</option></select><span><svg><use href="#i-chev"/></svg></span></div>
                        <label for="speed">Speed:</label>
                        <div class="combo"><select id="speed"><option>Medium</option></select><span><svg><use href="#i-chev"/></svg></span></div>
                    </div>
                    <div class="effect-list">
                        <div class="effect">
                            <span>1</span>
                            <svg class="mouse"><use href="#i-mouse"/></svg>
                            <svg class="path-icon"><use href="#i-path"/></svg>
                            <span>clear_logo_i4c</span>
                            <button aria-label="Effect menu"><svg><use href="#i-chev"/></svg></button>
                        </div>
                        <ul class="context-menu">
                            <li><button><i class="checked"><svg><use href="#i-mouse"/></svg></i><span>Start On <u>C</u>lick</span></button></li>
                            <li><button><i></i><span>Start <u>W</u>ith Previous</span></button></li>
                            <li><button><i><svg><use href="#i-clock"/></svg></i><span>Start <u>A</u>fter Previous</span></button></li>
                            <li class="divider"><button class="hot"><i></i><span><u>E</u>ffect Options...</span></button></li>
                            <li><button><i></i><span><u>T</u>iming...</span></button></li>
                            <li><button><i></i><span><u>S</u>how Advanced Timeline</span></button></li>
                            <li><button><i></i><span><u>R</u>emove</span></button></li>
                        </ul>
                    </div>
                    <div class="reorder">
                        <button disabled aria-label="Move up"><svg><use href="#i-up"/></svg></button>
                        <span>Re-Order</span>
                        <button disabled aria-label="Move down"><svg><use href="#i-down"/></svg></button>
                    </div>
                    <div class="run-buttons">
                        <button class="xp play"><svg><use href="#i-play"/></svg>Play</button>
                        <button class="xp show"><svg><use href="#i-show"/></svg>Slide Show</button>
                    </div>
                    <label class="autopreview"><input type="checkbox" checked>AutoPreview</label>
                </div>
            </aside>
        </main>

        <div class="draw-dock">
            <div class="toolbar drawing-bar">
                <i class="grip"></i>
                <button class="text-tool"><span>D<u>r</u>aw</span><svg class="tri"><use href="#i-tri"/></svg></button>
                <button class="tool pressed select-tool" aria-label="Select objects"><svg><use href="#i-cursor"/></svg></button>
                <i class="sep"></i>
                <button class="text-tool shapes"><span>A<u>u</u>toShapes</span><svg class="tri"><use href="#i-tri"/></svg></button>
                <button class="tool" aria-label="Line"><svg><use href="#i-line"/></svg></button>
                <button class="tool" aria-label="Arrow"><svg><use href="#i-arrow"/></svg></button>
                <button class="tool" aria-label="Rectangle"><svg><use href="#i-rect"/></svg></button>
                <button class="tool" aria-label="Oval"><svg><use href="#i-oval"/></svg></button>
                <button class="tool" aria-label="Text box"><svg><use href="#i-text"/></svg></button>
                <button class="tool" aria-label="WordArt"><svg><use href="#i-wordart"/></svg></button>
                <button class="tool" aria-label="Diagram"><svg><use href="#i-diagram"/></svg></button>
                <button class="tool" aria-label="Clip art"><svg><use href="#i-clip"/></svg></button>
                <button class="tool" aria-label="Picture"><svg><use href="#i-pic"/></svg></button>
                <i class="sep"></i>
                <button class="tool" aria-label="Fill color"><svg><use href="#i-fill"/></svg></button>
                <button class="drop" aria-label="Fill color list"><svg class="tri"><use href="#i-tri"/></svg></button>
                <button class="tool" aria-label="Line color"><svg><use href="#i-brush"/></svg></button>
                <button class="drop" aria-label="Line color list"><svg class="tri"><use href="#i-tri"/></svg></button>
                <button class="tool font-color">A</button>
                <button class="drop" aria-label="Font color list"><svg class="tri"><use href="#i-tri"/></svg></button>
                <button class="tool" aria-label="Line style"><svg><use href="#i-weight"/></svg></button>
                <button class="tool" aria-label="Dash style"><svg><use href="#i-dash"/></svg></button>
                <button class="tool" aria-label="Arrow style"><svg><use href="#i-arrows"/></svg></button>
                <button class="tool" aria-label="Shadow style"><svg><use href="#i-shadow"/></svg></button>
                <button class="tool" aria-label="3-D style"><svg><use href="#i-cube"/></svg></button>
                <button class="more" aria-label="Toolbar options"><svg><use href="#i-more-one"/></svg></button>
            </div>
        </div>

        <footer class="statusbar">
            <span class="slide-no">Slide 7 of 7</span>
            <span class="design-name">Default Design</span>
            <span class="spelling"><svg><use href="#i-book"/></svg></span>
        </footer>
        <div class="taskbar"><i class="start"></i><i class="tasks"></i><i class="tray"></i></div>
    </div>
</body>
</html>
```

FILE: styles.css
```
* { box-sizing: border-box; }
body {
    margin: 0; padding: 124px 70px 11px 51px; min-height: 100vh;
    display: flex; background: #fff; color: #000;
    font-family: "DejaVu Sans Condensed", "Noto Sans", sans-serif; font-size: 20px;
}
h1, h2, h3, p, ol, ul { margin: 0; padding: 0; }
ol, ul { list-style: none; }
button, select, input, textarea { font: inherit; color: inherit; margin: 0; }
button { border: 0; padding: 0; background: none; white-space: nowrap; }
select { appearance: none; border: 0; background: none; padding: 0; opacity: 1; }
svg { display: block; flex: none; }
u { text-underline-offset: 3px; }
.sprite { position: absolute; width: 0; height: 0; }
.window { flex: 1; min-width: 0; display: flex; flex-direction: column; background: #c5dafa; }
.tri { width: 10px; height: 6px; }
.big-tri { width: 17px; height: 9px; }

/* Title bar */
.titlebar {
    height: 48px; padding: 0 4px; display: flex; align-items: center; color: #fff;
    background: linear-gradient(#3f97ff, #0a6cf4 10%, #0058e4 30%, #005ef0 60%, #006eff 85%, #0040c8);
}
.app-icon { width: 30px; height: 30px; }
.titlebar h1 { flex: 1; margin-left: 7px; font: bold 26px Roboto, sans-serif; text-shadow: 2px 2px #0b2a86; }
.caption-buttons { display: flex; gap: 5px; }
.caption {
    width: 39px; height: 39px; border: 2px solid #fff; border-radius: 5px; padding: 5px;
    background: radial-gradient(circle at 30% 20%, #7ba1f4, #2f5fe0 60%, #1c48c0);
}
.caption svg { width: 24px; height: 24px; }
.caption.close { background: radial-gradient(circle at 30% 20%, #f0a07c, #dd4a22 60%, #b8330f); }

/* Menu bar */
.menubar {
    height: 47px; padding: 0 8px 2px 10px; display: flex; align-items: center; gap: 31px;
    background: linear-gradient(90deg, #adc8f7, #c5dafa 60%);
}
.menubar .grip { margin: 0; height: 20px; }
.doc-icon { width: 32px; height: 32px; margin: 0 -14px 0 -26px; }
.grip {
    width: 4px; height: 28px; margin: 0 4px 0 6px; flex: none;
    background: repeating-linear-gradient(#27408b 0 4px, transparent 4px 8px);
}
.ask { margin-left: auto; width: 279px; height: 33px; display: flex; background: #fff; padding: 2px; }
.ask input { flex: 1; min-width: 0; border: 0; background: none; padding: 0 2px; }
.ask input::placeholder { color: #7d7d85; opacity: 1; }
.ask-drop { width: 21px; background: #c5dafa; display: grid; place-items: center; }
.plain-x svg { width: 15px; height: 15px; }
.menubar .plain-x { margin-left: -20px; }

/* Toolbars */
.toolbars {
    display: grid; grid-template-columns: 747px 1fr; gap: 2px 7px; padding-left: 6px;
    background: linear-gradient(90deg, #adc8f7, #c5dafa 60%);
}
.toolbar {
    height: 47px; display: flex; align-items: center; border-radius: 6px;
    background: linear-gradient(#ddecfe, #cfe0fb 40%, #a9c6f2 75%, #84a9e4); border-bottom: 2px solid #33589c;
}
.standard .grip { margin-right: 0; }
.tool { width: 44px; height: 42px; flex: none; display: grid; place-items: center; }
.tool svg { width: 27px; height: 27px; }
.drop { width: 18px; height: 42px; flex: none; display: grid; place-items: center; }
.sep { width: 4px; height: 28px; margin: 0 3px; flex: none; background: linear-gradient(90deg, #6a8ccb 0 2px, #f1f7ff 2px); }
.more {
    width: 22px; height: 47px; margin: 0 0 -2px auto; flex: none; border-radius: 0 6px 6px 0;
    background: linear-gradient(#7ba2e6, #3465bc 60%, #0a3592); display: grid; place-items: center;
}
.more svg { width: 15px; height: 40px; }
.snagit { width: 445px; }
.dim, .letter, .grow { color: #5c78b0; }
.pressed { height: 42px; background: #ffb85c; background: linear-gradient(#ffcb80, #fdae52); border: 2px solid #8a7f72; }
.letter { font: bold 24px "Liberation Serif", serif; }
.shadowed { text-shadow: 2px 2px 1px #8da2cc; }
.grow { display: flex; justify-content: center; align-items: center; font: bold 30px "Liberation Serif", serif; color: #7488b0; }
.grow svg { width: 9px; height: 5px; margin-bottom: 18px; }
.less { font-size: 22px; }
.font-color { align-content: center; font: bold 28px/22px "Liberation Serif", serif; color: #3c62a8; }
.font-color::after { content: ""; width: 30px; height: 6px; background: #000; }
.off-combo { height: 37px; display: flex; align-items: center; background: #ebe8d9; border: 2px solid #8f8d85; padding-right: 6px; color: #85837a; }
.off-combo select { flex: 1; min-width: 0; }
.font-name { width: 222px; margin-right: 5px; }
.font-size { width: 71px; }
.formatting .grip { margin-right: 3px; }
.text-tool { display: flex; align-items: center; gap: 5px; padding: 0 5px; height: 42px; }
.text-tool svg { width: 30px; height: 26px; }
.text-tool .tri { width: 10px; height: 6px; }
.snagit .grip { margin-right: 3px; }
.snagit .tool { margin-right: 4px; }
.snag-combo { position: relative; width: 241px; height: 33px; background: #fff; }
.snag-combo select { width: 100%; height: 100%; padding: 0 4px; }
.snag-combo .tri { position: absolute; right: 2px; top: 2px; width: 20px; height: 29px; padding: 11px 5px; background: #d3e2fb; pointer-events: none; }

/* Workspace */
.workspace { flex: 1; display: grid; grid-template-columns: 248px minmax(0, 1fr) 388px; min-height: 0; }
.outline-pane { display: flex; flex-direction: column; background: #fff; border-right: 9px solid #d8e6fc; box-shadow: inset -2px 0 #fff; }
.pane-tabs { position: relative; height: 40px; display: flex; align-items: center; background: #c5dafa; padding: 6px 12px 0 18px; }
.tab-shape { position: absolute; inset: 0; width: 100%; height: 100%; }
.pane-tabs button { position: relative; }
.pane-tabs .active { font-weight: bold; margin-left: 25px; }
.pane-tabs .plain-x { margin: -8px 0 0 auto; }
.thumbs { flex: 1; display: flex; min-height: 0; }
.thumbs ol { flex: 1; padding: 16px 0 59px; display: grid; grid-template-rows: repeat(7, 1fr); }
.thumbs li { display: flex; }
.thumbs span { width: 45px; padding: 10px 0 0 14px; font-weight: bold; }
.thumb { width: 149px; height: 113px; border: 2px solid #000; background: #fff; }
.tiny-title { font: bold 9px/10px "Liberation Sans", sans-serif; text-align: center; padding-top: 10px; }
.selected { outline: 5px solid #878787; outline-offset: 4px; }
.anim-mark { width: 20px; height: 16px; margin: 3px 0 0 -5px; opacity: .45; filter: grayscale(1); }
.scroll { width: 29px; display: flex; flex-direction: column; background: #fbfaf5; }
.scroll > button {
    width: 27px; height: 29px; margin: 1px; flex: none; display: grid; place-items: center; color: #44597f;
    border-radius: 3px; background: #c3d3fd; border: 1px solid #e8effe;
}
.scroll > button svg, .combo span svg { width: 15px; height: 10px; }
.scroll.off { justify-content: space-between; }
.scroll.off > button { background: #efede4; color: #c6c4b9; border-color: #e2e0d6; }
.views { height: 30px; display: flex; background: #c5dafa; }
.views > button { width: 30px; height: 30px; display: grid; place-items: center; }
.views > button svg { width: 22px; height: 17px; }
.views .on { background: #fdb768; border: 2px solid #101080; }
.hscroll { flex: 1; margin-left: 2px; display: flex; justify-content: space-between; background: #f7f5ee; }
.hscroll button { width: 28px; display: grid; place-items: center; background: #efede4; color: #c6c4b9; border: 1px solid #e2e0d6; border-radius: 3px; }
.hscroll svg { width: 10px; height: 14px; }

.editor { position: relative; display: grid; grid-template-columns: minmax(0, 1fr) 29px; grid-template-rows: 1fr 12px 71px; }
.stage { background: #969cb2; border-left: 1px solid #5b84c8; padding: 65px 37px 65px 36px; display: flex; }
.slide { position: relative; flex: 1; border: 2px solid #000; background: #fff; box-shadow: 7px 9px #000; }
.slide-text { margin: 100px 0 0 71px; font: 51px/62px "Liberation Sans", sans-serif; white-space: nowrap; }
.drawing { position: absolute; left: 0; top: 0; width: 1183px; height: 888px; }
.logo { position: absolute; left: 118px; top: 645px; width: 108px; height: 108px; border-radius: 50%; background: #bda2cd; font: bold 16px/16px "DejaVu Serif", serif; white-space: nowrap; }
.logo span { position: absolute; }
.logo-top { left: -24px; top: 18px; }
.logo-mid { left: 14px; top: 37px; font-size: 44px; line-height: 40px; color: #fff; }
.logo-help { left: 15px; top: 78px; }
.logo-net { left: 30px; top: 94px; }
.order-tag { position: absolute; left: 42px; top: 643px; width: 34px; height: 29px; background: #c5dbfa; text-align: center; line-height: 29px; }

.thumb-bar {
    margin: auto 2px 3px; height: 120px; border-radius: 3px; border: 1px solid #9db6ee;
    background: repeating-linear-gradient(#eef3ff 0 2px, #8fa8ea 2px 4px) center / 13px 16px no-repeat, linear-gradient(90deg, #cddcff, #b7cbfa);
}
.jump { height: 60px; margin: 2px 0 27px; background: #c5dafa; display: grid; place-items: center; border-bottom: 2px solid #6d8fc9; }
.main-scroll { background: linear-gradient(#fbfaf5, #fbfaf5) top / 100% calc(100% - 28px) no-repeat, #ebe8d9; }
.jump svg { width: 14px; height: 18px; }
.splitter { grid-column: 1 / 3; background: #dde8fb; border-bottom: 2px solid #7796d0; }
.notes { resize: none; border: 0; border-left: 1px solid #5b84c8; outline: 0; padding: 8px 4px; font-size: 23px; line-height: 30px; background: #fff; overflow: hidden; }
.notes::placeholder { color: #222; opacity: 1; }

/* Floating Picture toolbar */
.picture-bar { position: absolute; left: 322px; bottom: 0; width: 651px; height: 87px; border: 4px solid #2f6bcb; border-top-width: 3px; background: #2f6bcb; }
.picture-bar h2 { height: 34px; border-top: 2px solid #cfe0fb; border-left: 1px solid #cfe0fb; padding-left: 3px; font-size: 20px; line-height: 34px; color: #fff; }
.picture-tools { height: 46px; display: flex; align-items: center; background: linear-gradient(#ddecfe, #c4d9f9 50%, #a0bdee); border-bottom: 2px solid #cfe0fb; }
.picture-tools .tool { width: 43px; }
.picture-tools .sep { margin: 0 5px 0 4px; }

/* Custom Path dialog */
.dialog-shot { position: absolute; left: 588px; top: 572px; width: 530px; height: 483px; padding: 12px 0 0 14px; background: #969cb2; overflow: hidden; font-size: 16px; }
.dialog { width: 524px; height: 471px; border: solid #0a48d8; border-width: 0 4px 5px; border-radius: 8px 0 0 0; background: #ebe9dc; }
.dialog header {
    height: 43px; margin: 0 -4px; padding: 3px 5px 0 8px; border-radius: 8px 0 0 0; display: flex; align-items: center; justify-content: space-between;
    background: linear-gradient(#3f97ff, #0a6cf4 10%, #0058e4 30%, #005ef0 60%, #006eff 85%, #0040c8);
}
.dialog h2 { color: #fff; font: bold 20px Roboto, sans-serif; text-shadow: 1px 1px #0b2a86; }
.dialog header .caption { width: 31px; height: 31px; padding: 4px; }
.dialog header svg { width: 19px; height: 19px; }
.dialog-tabs { margin: 10px 0 0 9px; height: 29px; display: flex; align-items: flex-end; }
.dialog-tabs button { width: 56px; height: 26px; background: #f8f7f2; border: 1px solid #9aa3ac; border-bottom: 0; border-radius: 0 4px 0 0; }
.dialog-tabs .active { width: 66px; height: 30px; margin-bottom: -1px; padding-bottom: 3px; border-top: 4px solid #f5b53c; border-radius: 4px 4px 0 0; background: #fff; z-index: 1; }
.dialog-page { width: 498px; height: 326px; margin-left: 9px; padding: 12px 11px 0 12px; border: 1px solid #919b9c; border-right-width: 2px; border-bottom-width: 2px; background: linear-gradient(#fff, #f3f2ee); }
.dialog-page h3 { height: 24px; margin-bottom: 8px; font-size: 16px; font-weight: normal; display: flex; align-items: center; gap: 6px; }
.dialog-page h3::after { content: ""; flex: 1; height: 1px; background: #aca899; }
.row { height: 30px; margin-bottom: 5px; padding-left: 12px; display: flex; align-items: center; }
.row label { width: 129px; }
.row .combo { width: 263px; }
.disabled { color: #a9a79a; }
.combo { position: relative; height: 100%; background: #fff; border: 2px solid #86a3c8; }
.combo select { width: 100%; height: 100%; padding: 0 3px; }
.combo span { position: absolute; right: 3px; top: 3px; bottom: 3px; width: 22px; border-radius: 2px; background: #c3d3fd; color: #44597f; display: grid; place-items: center; pointer-events: none; }
.dialog .combo span svg { width: 12px; height: 9px; }
.focus select { background: #2f68c8; color: #fff; width: 231px; height: 24px; margin: 1px 2px; padding: 0 1px; outline: 1px dotted #d79a40; outline-offset: -1px; }
.disabled .combo, .spinner { background: #ebe9d8; }
.disabled .combo span, .spinner span { background: #f2f0e8; color: #c6c4b9; }
.checks { display: grid; grid-template-columns: 238px 1fr; gap: 9px 0; padding-left: 12px; margin: 6px 0 14px; }
.checks label { display: flex; align-items: center; gap: 4px; height: 19px; }
input[type=checkbox] { appearance: none; width: 19px; height: 19px; border: 2px solid #2a5c96; background: linear-gradient(135deg, #e4e3dc, #fff); display: grid; place-items: center; }
input[type=checkbox]:checked::after { content: ""; width: 5px; height: 9px; margin-bottom: 3px; border: solid #21a121; border-width: 0 3px 3px 0; transform: rotate(42deg); }
.sound { width: 37px; height: 37px; margin: 2px 0 -5px 15px; border: 1px solid #c6c4b4; border-radius: 3px; background: #f3f2ea; display: grid; place-items: center; }
.sound svg { width: 18px; height: 26px; }
.delay { padding-left: 141px; }
.spinner { width: 104px; height: 29px; display: flex; border: 2px solid #86a3c8; padding: 2px; }
.spinner input { flex: 1; min-width: 0; border: 0; background: none; }
.spinner span { width: 22px; display: grid; place-items: center; }
.spinner svg { width: 10px; height: 6px; }
.row.delay label { width: auto; margin-left: 12px; }
.dialog footer { display: flex; justify-content: flex-end; gap: 16px; padding: 17px 9px 0 0; }
.dialog footer .xp { width: 107px; height: 30px; border-color: #1f4a86; }
.xp { border: 2px solid #17457e; border-radius: 5px; background: linear-gradient(#fff, #f2f0ea 80%, #dcd8cc); display: flex; align-items: center; justify-content: center; }
.default { box-shadow: inset 0 0 0 2px #a9c4f2; }

/* Task pane */
.task-pane { border: 6px solid #b9d4fb; border-top-color: #c5dafa; display: flex; flex-direction: column; background: #deebfe; }
.task-pane header { height: 47px; display: flex; align-items: center; padding-right: 9px; background: linear-gradient(#ddecfe, #c4d9f9 50%, #84a9e4); }
.task-pane header .grip { margin: 0 8px 0 6px; }
.task-pane h2 { flex: 1; font-size: 20px; }
.task-pane header button { margin-left: 17px; }
.pane-nav { width: 164px; height: 36px; display: flex; align-items: center; justify-content: space-between; padding: 0 14px; background: #4b7ccb; border-radius: 8px 0 8px 0; }
.pane-nav svg { width: 25px; height: 25px; }
.pane-nav i { width: 2px; height: 26px; background: #d5e4fb; }
.pane-body { flex: 1; padding: 15px 11px; display: flex; flex-direction: column; }
.effect-buttons { display: flex; gap: 21px; padding-left: 2px; }
.effect-buttons .xp { height: 39px; }
.add { width: 177px; gap: 11px; }
.add svg:first-child { width: 30px; height: 24px; }
.add .big-tri { width: 13px; height: 7px; }
.remove { width: 134px; gap: 7px; }
.remove svg { width: 32px; height: 26px; }
.pane-body h3 { margin-top: 15px; height: 29px; font-size: 20px; line-height: 30px; border-bottom: 2px solid #86adea; }
.fields { display: grid; grid-template-columns: 119px 1fr; gap: 7px 0; margin-top: 12px; }
.fields label { line-height: 27px; }
.fields .combo { height: 38px; }
.fields select { padding: 0 4px; }
.fields .combo span { width: 28px; }
.mouse { width: 25px; height: 25px; }
.with-icon { display: flex; align-items: center; padding-left: 8px; }
.with-icon select { padding-left: 9px; }
.effect-list { position: relative; flex: 1; margin-top: 15px; padding: 2px 10px; border: 2px solid #8ba3c8; background: #fff; }
.effect { height: 37px; display: flex; align-items: center; border: 3px solid #aaa78f; padding: 0 5px 0 12px; }
.effect .mouse { margin-left: 5px; }
.path-icon { width: 26px; height: 24px; margin: 0 11px 0 27px; }
.effect button { width: 24px; height: 22px; margin-left: auto; background: #9db6f2; color: #38548c; display: grid; place-items: center; }
.effect button svg { width: 15px; height: 10px; }
.context-menu {
    position: absolute; left: 17px; right: 10px; top: 39px; padding: 3px; border: 2px solid #0e3c94; box-shadow: 5px 5px 5px #d8dcf0;
    background: linear-gradient(90deg, #dde9fd, #c0d8fc 22px, #7da6e8 45px, #f6f6f6 45px);
}
.context-menu button { width: 100%; height: 43px; display: flex; align-items: center; text-align: left; border: 2px solid transparent; }
.context-menu i { width: 36px; height: 36px; margin-right: 18px; display: grid; place-items: center; }
.context-menu i svg { width: 24px; height: 24px; }
.context-menu .checked { background: #fdb768; border: 2px solid #101080; }
.divider { margin-top: 3px; padding-top: 2px; background: linear-gradient(90deg, transparent 56px, #6d8fd0 56px) top / 100% 2px no-repeat; }
.context-menu .hot { background: #ffeec2; border-color: #101080; }
.reorder { display: flex; justify-content: center; align-items: center; gap: 18px; height: 29px; margin-top: 9px; color: #a9a79a; text-shadow: 1px 1px #fff; }
.reorder button { width: 31px; height: 29px; border: 2px solid #d8d6c4; border-radius: 4px; background: #f5f4ec; display: grid; place-items: center; }
.reorder svg { width: 21px; height: 20px; }
.run-buttons { display: flex; gap: 20px; padding: 19px 0 17px 2px; border-bottom: 2px solid #86adea; }
.run-buttons .xp { height: 39px; }
.play { width: 102px; gap: 16px; }
.play svg { width: 21px; height: 22px; }
.show { width: 157px; gap: 9px; }
.show svg { width: 30px; height: 29px; }
.autopreview { display: flex; align-items: center; gap: 5px; height: 24px; margin: 18px 0 2px; }
.autopreview input { width: 24px; height: 24px; }
.autopreview input:checked::after { width: 7px; height: 12px; }

/* Drawing toolbar, status bar and taskbar */
.draw-dock { padding-left: 6px; background: #c5dafa; }
.drawing-bar { width: 1117px; height: 49px; }
.drawing-bar .more { height: 49px; }
.drawing-bar .text-tool { gap: 7px; }
.select-tool { border-color: #101080; }
.drawing-bar .shapes { padding: 0 12px 0 8px; }
.statusbar { height: 43px; display: flex; gap: 12px; padding: 4px 8px; background: #ebe9dc; border-top: 2px solid #a9aaa4; }
.statusbar span { border: 2px solid #dcdac9; display: grid; place-items: center; }
.slide-no { width: 458px; }
.design-name { width: 461px; }
.statusbar .spelling { width: 58px; place-items: start center; }
.spelling svg { width: 36px; height: 28px; }
.taskbar { height: 12px; display: flex; background: linear-gradient(#2a66d8, #3d88f0); }
.start { width: 187px; background: linear-gradient(#3f8a4c, #6db36a); border-radius: 0 8px 0 0; }
.tasks { flex: 1; }
.tray { width: 174px; background: #12a0ee; border-left: 2px solid #0c3a8c; border-top: 2px solid #0a62c4; }
```
